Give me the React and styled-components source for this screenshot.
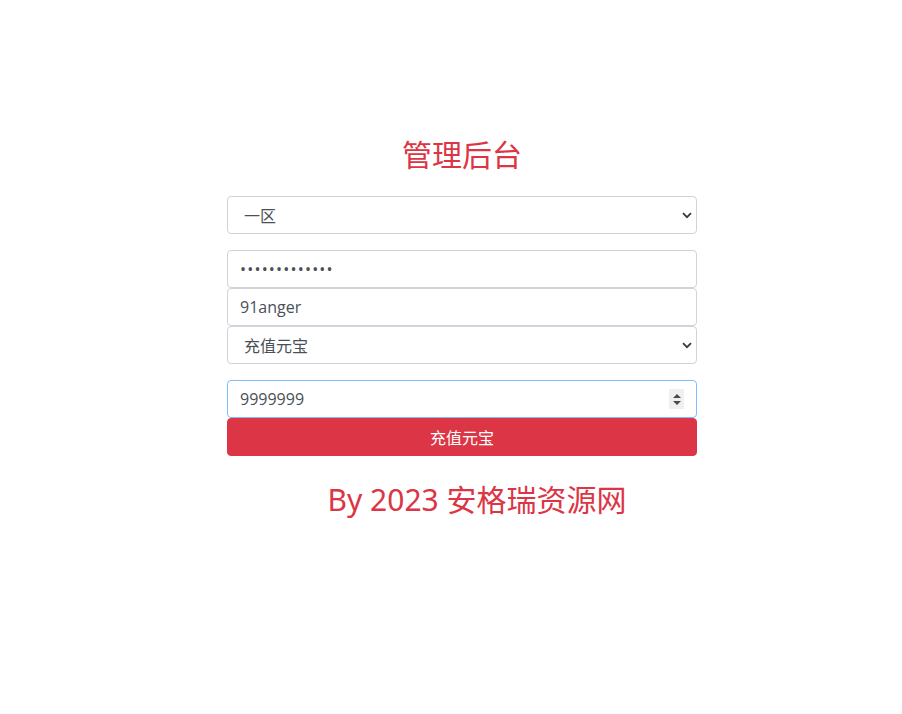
import React from "react";
import styled, { createGlobalStyle } from "styled-components";

const Global = createGlobalStyle`
  html, body { margin: 0; padding: 0; background: #fff; }
  body {
    font-family: "Open Sans", "Noto Sans CJK SC", sans-serif;
    color: #212529;
  }
  * { box-sizing: border-box; }
`;

const Page = styled.div`
  padding-top: 134px;
  padding-left: 22px;
  display: flex;
  justify-content: center;
`;

const Container = styled.div`
  width: 470px;
  display: flex;
  flex-direction: column;
`;

const Title = styled.h2`
  margin: 0 0 24px;
  font-family: "Noto Sans CJK SC", sans-serif;
  font-weight: 400;
  font-size: 30px;
  line-height: 38px;
  color: #dc3545;
  text-align: center;
`;

const Field = styled.div`
  position: relative;
  margin-bottom: ${(p) => (p.$gap ? "16px" : "0")};
`;

const baseControl = `
  display: block;
  width: 100%;
  height: 38px;
  padding: 6px 12px;
  font-family: "Open Sans", "Noto Sans CJK SC", sans-serif;
  font-size: 16px;
  line-height: 24px;
  color: #495057;
  background: #fff;
  border: 1px solid #ced4da;
  border-radius: 4px;
  outline: none;
`;

const Select = styled.select`
  ${baseControl}
  appearance: none;
  padding-left: 16px;
  font-family: "Noto Sans CJK SC", sans-serif;
  font-size: 16px;
`;

const Input = styled.input`
  ${baseControl}
  border-color: ${(p) => (p.$focus ? "#80bdff" : "#ced4da")};
  &[type="password"] { letter-spacing: 1.2px; }
  &::-webkit-inner-spin-button,
  &::-webkit-outer-spin-button { -webkit-appearance: none; margin: 0; }
`;

const Chevron = styled.svg`
  position: absolute;
  right: 5px;
  top: 16px;
  width: 10px;
  height: 7px;
  pointer-events: none;
`;

const Spinner = styled.div`
  position: absolute;
  right: 13px;
  top: 9px;
  width: 15px;
  height: 20px;
  background: #efefef;
  display: flex;
  flex-direction: column;
  align-items: center;
  justify-content: center;
  gap: 3px;
`;

const Tri = styled.span`
  width: 0;
  height: 0;
  border-left: 4px solid transparent;
  border-right: 4px solid transparent;
  ${(p) =>
    p.$down
      ? "border-top: 4px solid #4a4a4a;"
      : "border-bottom: 4px solid #4a4a4a;"}
`;

const Button = styled.button`
  display: block;
  width: 100%;
  height: 38px;
  margin: 0;
  border: 1px solid #dc3545;
  border-radius: 4px;
  background: #dc3545;
  color: #fff;
  font-family: "Noto Sans CJK SC", sans-serif;
  font-size: 16px;
  line-height: 24px;
  cursor: pointer;
`;

const Footer = styled.div`
  margin-top: 26px;
  padding-left: 30px;
  font-family: "Noto Sans", "Noto Sans CJK SC", sans-serif;
  font-size: 30px;
  line-height: 36px;
  color: #dc3545;
  text-align: center;
`;

const Arrow = () => (
  <Chevron viewBox="0 0 10 7">
    <path d="M1 1.2 L5 5.2 L9 1.2" fill="none" stroke="#3a3a3a" strokeWidth="1.8" />
  </Chevron>
);

export default function App() {
  return (
    <>
      <Global />
      <Page>
        <Container>
          <Title>管理后台</Title>
          <Field $gap>
            <Select defaultValue="1">
              <option value="1">一区</option>
            </Select>
            <Arrow />
          </Field>
          <Field>
            <Input type="password" defaultValue="1234567890123" readOnly />
          </Field>
          <Field>
            <Input type="text" defaultValue="91anger" readOnly />
          </Field>
          <Field $gap>
            <Select defaultValue="yb">
              <option value="yb">充值元宝</option>
            </Select>
            <Arrow />
          </Field>
          <Field>
            <Input type="number" defaultValue="9999999" $focus readOnly />
            <Spinner>
              <Tri />
              <Tri $down />
            </Spinner>
          </Field>
          <Button>充值元宝</Button>
          <Footer>By 2023 安格瑞资源网</Footer>
        </Container>
      </Page>
    </>
  );
}
